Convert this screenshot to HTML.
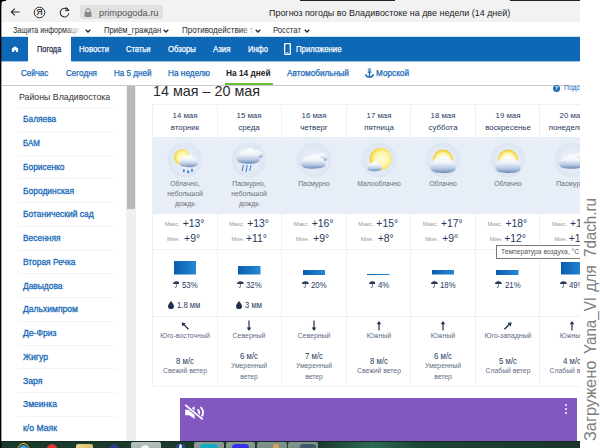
<!DOCTYPE html><html lang="ru"><head><meta charset="utf-8"><title>Прогноз погоды во Владивостоке на две недели (14 дней)</title><style>
*{margin:0;padding:0;box-sizing:border-box}
html,body{width:600px;height:448px;overflow:hidden;background:#fff}
body{position:relative;font-family:"Liberation Sans", sans-serif;color:#222}
.a{position:absolute;white-space:nowrap}
.c{position:absolute;white-space:nowrap;text-align:center;transform:translateX(-50%)}
</style></head><body><div class="a" style="left:0px;top:0px;width:580px;height:21.5px;background:#f2f2f2;"></div>
<div class="a" style="left:300px;top:0px;width:95px;height:1px;background:#222;"></div>
<div class="a" style="left:510px;top:0px;width:70px;height:1px;background:#222;"></div>
<div class="a" style="left:80px;top:5px;width:83px;height:14px;background:#e1e1e1;border-radius:3px;"></div>
<svg class="a" style="left:9.6px;top:7.4px" width="12" height="10" viewBox="0 0 12 10"><path d="M9.6 5H1.6M4.8 1.6L1.3 5l3.5 3.4" fill="none" stroke="#2a2a2a" stroke-width="1.05"/></svg>
<svg class="a" style="left:32.9px;top:5.9px" width="13" height="13" viewBox="0 0 13 13"><circle cx="6.5" cy="6.5" r="5.3" fill="none" stroke="#2a2a2a" stroke-width="1"/></svg>
<div class="a" style="left:36.6px;top:7.46px;font-size:8.4px;line-height:10.08px;color:#1a1a1a;-webkit-text-stroke:0.2px #1a1a1a;">Я</div>
<svg class="a" style="left:58px;top:5.9px" width="13" height="13" viewBox="0 0 13 13"><path d="M10.2 4.4A4.3 4.3 0 1 0 10.8 7.2" fill="none" stroke="#2a2a2a" stroke-width="1.05"/><path d="M8.2 1.4l2.4 3.2-3.4 0.2" fill="none" stroke="#2a2a2a" stroke-width="1.05"/></svg>
<svg class="a" style="left:84px;top:8px" width="8" height="9" viewBox="0 0 8 9"><rect x="0.5" y="4" width="7" height="5" rx="0.8" fill="#8a8a8a"/><path d="M2 4V2.6a2 2 0 0 1 4 0V4" fill="none" stroke="#8a8a8a" stroke-width="1"/></svg>
<div class="a" style="left:99.25px;top:6.54px;font-size:9.6px;line-height:11.52px;color:#555;transform:scaleX(0.9616);transform-origin:0 50%;">primpogoda.ru</div>
<div class="a" style="left:268.75px;top:6.54px;font-size:9.6px;line-height:11.52px;color:#222;transform:scaleX(0.9316);transform-origin:0 50%;">Прогноз погоды во Владивостоке на две недели (14 дней)</div>
<div class="a" style="left:12.5px;top:24.88px;font-size:9.2px;line-height:11.04px;color:#2a2a2a;transform:scaleX(0.7772);transform-origin:0 50%;">Защита информаци</div>
<div class="a" style="left:66px;top:24px;width:13px;height:12px;background:linear-gradient(90deg,rgba(255,255,255,0),rgba(255,255,255,.85));"></div>
<svg class="a" style="left:84.7px;top:28.7px" width="6" height="4" viewBox="0 0 6 4"><path d="M0.7 0.7L3 3l2.3-2.3" fill="none" stroke="#222" stroke-width="1.25"/></svg>
<div class="a" style="left:103.75px;top:24.88px;font-size:9.2px;line-height:11.04px;color:#2a2a2a;transform:scaleX(0.8339);transform-origin:0 50%;">Приём_граждан</div>
<svg class="a" style="left:163px;top:28.7px" width="6" height="4" viewBox="0 0 6 4"><path d="M0.7 0.7L3 3l2.3-2.3" fill="none" stroke="#222" stroke-width="1.25"/></svg>
<div class="a" style="left:181.75px;top:24.88px;font-size:9.2px;line-height:11.04px;color:#2a2a2a;transform:scaleX(0.8726);transform-origin:0 50%;">Противодействие т</div>
<div class="a" style="left:241px;top:24px;width:13px;height:12px;background:linear-gradient(90deg,rgba(255,255,255,0),rgba(255,255,255,.85));"></div>
<svg class="a" style="left:254.8px;top:28.7px" width="6" height="4" viewBox="0 0 6 4"><path d="M0.7 0.7L3 3l2.3-2.3" fill="none" stroke="#222" stroke-width="1.25"/></svg>
<div class="a" style="left:273px;top:24.88px;font-size:9.2px;line-height:11.04px;color:#2a2a2a;transform:scaleX(0.8421);transform-origin:0 50%;">Росстат</div>
<svg class="a" style="left:303.5px;top:28.7px" width="6" height="4" viewBox="0 0 6 4"><path d="M0.7 0.7L3 3l2.3-2.3" fill="none" stroke="#222" stroke-width="1.25"/></svg>
<div class="a" style="left:1px;top:36.8px;width:579px;height:24.6px;background:#0e68b6;"></div>
<div class="a" style="left:1px;top:61px;width:579px;height:1px;background:rgba(14,104,182,0.4);"></div>
<div class="a" style="left:1px;top:36px;width:579px;height:1px;background:rgba(14,104,182,0.2);"></div>
<div class="a" style="left:28px;top:36px;width:43px;height:26px;background:#fff;"></div>
<svg class="a" style="left:10.8px;top:46px" width="8" height="6.4" viewBox="0 0 9 8" preserveAspectRatio="none"><path d="M4.5 0.3L0 4.2h1.2V8h2.3V5.4h2V8h2.3V4.2H9z" fill="#fff"/></svg>
<div class="a" style="left:37px;top:43.90px;font-size:9px;line-height:10.80px;color:#1c2b48;transform:scaleX(0.8186);transform-origin:0 50%;-webkit-text-stroke:0.25px #1c2b48;">Погода</div>
<div class="a" style="left:79.25px;top:43.90px;font-size:9px;line-height:10.80px;color:#fff;transform:scaleX(0.8610);transform-origin:0 50%;-webkit-text-stroke:0.25px #fff;">Новости</div>
<div class="a" style="left:126.25px;top:43.90px;font-size:9px;line-height:10.80px;color:#fff;transform:scaleX(0.8399);transform-origin:0 50%;-webkit-text-stroke:0.25px #fff;">Статьи</div>
<div class="a" style="left:168px;top:43.90px;font-size:9px;line-height:10.80px;color:#fff;transform:scaleX(0.8547);transform-origin:0 50%;-webkit-text-stroke:0.25px #fff;">Обзоры</div>
<div class="a" style="left:213px;top:43.90px;font-size:9px;line-height:10.80px;color:#fff;transform:scaleX(0.8736);transform-origin:0 50%;-webkit-text-stroke:0.25px #fff;">Азия</div>
<div class="a" style="left:247.5px;top:43.90px;font-size:9px;line-height:10.80px;color:#fff;transform:scaleX(0.8382);transform-origin:0 50%;-webkit-text-stroke:0.25px #fff;">Инфо</div>
<svg class="a" style="left:284px;top:43px" width="7" height="12" viewBox="0 0 7 12"><rect x="0.6" y="0.6" width="5.8" height="10.8" rx="1" fill="none" stroke="#fff" stroke-width="1.4"/><rect x="2.5" y="9.3" width="2" height="1" fill="#fff"/></svg>
<div class="a" style="left:295.75px;top:43.90px;font-size:9px;line-height:10.80px;color:#fff;transform:scaleX(0.8618);transform-origin:0 50%;-webkit-text-stroke:0.25px #fff;">Приложение</div>
<div class="a" style="left:20.75px;top:67.60px;font-size:9px;line-height:10.80px;color:#1468b6;transform:scaleX(0.8866);transform-origin:0 50%;-webkit-text-stroke:0.25px #1468b6;">Сейчас</div>
<div class="a" style="left:65.5px;top:67.60px;font-size:9px;line-height:10.80px;color:#1468b6;transform:scaleX(0.8986);transform-origin:0 50%;-webkit-text-stroke:0.25px #1468b6;">Сегодня</div>
<div class="a" style="left:113.5px;top:67.60px;font-size:9px;line-height:10.80px;color:#1468b6;transform:scaleX(0.8979);transform-origin:0 50%;-webkit-text-stroke:0.25px #1468b6;">На 5 дней</div>
<div class="a" style="left:168px;top:67.60px;font-size:9px;line-height:10.80px;color:#1468b6;transform:scaleX(0.9180);transform-origin:0 50%;-webkit-text-stroke:0.25px #1468b6;">На неделю</div>
<div class="a" style="left:287px;top:67.60px;font-size:9px;line-height:10.80px;color:#1468b6;transform:scaleX(0.9161);transform-origin:0 50%;-webkit-text-stroke:0.25px #1468b6;">Автомобильный</div>
<div class="a" style="left:376.25px;top:67.60px;font-size:9px;line-height:10.80px;color:#1468b6;transform:scaleX(0.9119);transform-origin:0 50%;-webkit-text-stroke:0.25px #1468b6;">Морской</div>
<div class="a" style="left:226.25px;top:67.60px;font-size:9px;line-height:10.80px;color:#222;transform:scaleX(0.9229);transform-origin:0 50%;font-weight:bold;">На 14 дней</div>
<svg class="a" style="left:365px;top:68px" width="9" height="10" viewBox="0 0 9 10"><circle cx="4.5" cy="1.6" r="1.1" fill="none" stroke="#1768b3" stroke-width="1"/><path d="M4.5 2.7V9M2.6 4.2h3.8M0.6 6.2c0.4 2 2 2.9 3.9 2.9s3.5-0.9 3.9-2.9" fill="none" stroke="#1768b3" stroke-width="1.25"/></svg>
<div class="a" style="left:2px;top:85px;width:578px;height:1px;background:#c9c9c9;"></div>
<div class="a" style="left:224.5px;top:83.4px;width:48px;height:1.9px;background:#6bbf32;"></div>
<div class="a" style="left:126px;top:86px;width:10px;height:355px;background:#efefef;"></div>
<div class="a" style="left:127px;top:86px;width:7.6px;height:123px;background:#b9b9b9;"></div>
<div class="a" style="left:18.75px;top:91.24px;font-size:9.6px;line-height:11.52px;color:#333;transform:scaleX(0.9148);transform-origin:0 50%;">Районы Владивостока</div>
<div class="a" style="left:23px;top:114.48px;font-size:9.2px;line-height:11.04px;color:#1468b6;transform:scaleX(0.9113);transform-origin:0 50%;-webkit-text-stroke:0.3px #1468b6;">Баляева</div>
<div class="a" style="left:17px;top:107.0px;width:99px;height:1px;background:#f5f5f5;"></div>
<div class="a" style="left:23px;top:138.23px;font-size:9.2px;line-height:11.04px;color:#1468b6;transform:scaleX(0.8669);transform-origin:0 50%;-webkit-text-stroke:0.3px #1468b6;">БАМ</div>
<div class="a" style="left:17px;top:130.75px;width:99px;height:1px;background:#f5f5f5;"></div>
<div class="a" style="left:23px;top:161.98px;font-size:9.2px;line-height:11.04px;color:#1468b6;transform:scaleX(0.9143);transform-origin:0 50%;-webkit-text-stroke:0.3px #1468b6;">Борисенко</div>
<div class="a" style="left:17px;top:154.5px;width:99px;height:1px;background:#f5f5f5;"></div>
<div class="a" style="left:23px;top:185.73px;font-size:9.2px;line-height:11.04px;color:#1468b6;transform:scaleX(0.9169);transform-origin:0 50%;-webkit-text-stroke:0.3px #1468b6;">Бородинская</div>
<div class="a" style="left:17px;top:178.25px;width:99px;height:1px;background:#f5f5f5;"></div>
<div class="a" style="left:23px;top:209.48px;font-size:9.2px;line-height:11.04px;color:#1468b6;transform:scaleX(0.9218);transform-origin:0 50%;-webkit-text-stroke:0.3px #1468b6;">Ботанический сад</div>
<div class="a" style="left:17px;top:202.0px;width:99px;height:1px;background:#f5f5f5;"></div>
<div class="a" style="left:23px;top:233.23px;font-size:9.2px;line-height:11.04px;color:#1468b6;transform:scaleX(0.9136);transform-origin:0 50%;-webkit-text-stroke:0.3px #1468b6;">Весенняя</div>
<div class="a" style="left:17px;top:225.75px;width:99px;height:1px;background:#f5f5f5;"></div>
<div class="a" style="left:23px;top:256.98px;font-size:9.2px;line-height:11.04px;color:#1468b6;transform:scaleX(0.9140);transform-origin:0 50%;-webkit-text-stroke:0.3px #1468b6;">Вторая Речка</div>
<div class="a" style="left:17px;top:249.5px;width:99px;height:1px;background:#f5f5f5;"></div>
<div class="a" style="left:23px;top:280.73px;font-size:9.2px;line-height:11.04px;color:#1468b6;transform:scaleX(0.9146);transform-origin:0 50%;-webkit-text-stroke:0.3px #1468b6;">Давыдова</div>
<div class="a" style="left:17px;top:273.25px;width:99px;height:1px;background:#f5f5f5;"></div>
<div class="a" style="left:23px;top:304.48px;font-size:9.2px;line-height:11.04px;color:#1468b6;transform:scaleX(0.9315);transform-origin:0 50%;-webkit-text-stroke:0.3px #1468b6;">Дальхимпром</div>
<div class="a" style="left:17px;top:297.0px;width:99px;height:1px;background:#f5f5f5;"></div>
<div class="a" style="left:23px;top:328.23px;font-size:9.2px;line-height:11.04px;color:#1468b6;transform:scaleX(0.9346);transform-origin:0 50%;-webkit-text-stroke:0.3px #1468b6;">Де-Фриз</div>
<div class="a" style="left:17px;top:320.75px;width:99px;height:1px;background:#f5f5f5;"></div>
<div class="a" style="left:23px;top:351.98px;font-size:9.2px;line-height:11.04px;color:#1468b6;transform:scaleX(0.9406);transform-origin:0 50%;-webkit-text-stroke:0.3px #1468b6;">Жигур</div>
<div class="a" style="left:17px;top:344.5px;width:99px;height:1px;background:#f5f5f5;"></div>
<div class="a" style="left:23px;top:375.73px;font-size:9.2px;line-height:11.04px;color:#1468b6;transform:scaleX(0.9447);transform-origin:0 50%;-webkit-text-stroke:0.3px #1468b6;">Заря</div>
<div class="a" style="left:17px;top:368.25px;width:99px;height:1px;background:#f5f5f5;"></div>
<div class="a" style="left:23px;top:399.48px;font-size:9.2px;line-height:11.04px;color:#1468b6;transform:scaleX(0.9311);transform-origin:0 50%;-webkit-text-stroke:0.3px #1468b6;">Змеинка</div>
<div class="a" style="left:17px;top:392.0px;width:99px;height:1px;background:#f5f5f5;"></div>
<div class="a" style="left:23px;top:423.23px;font-size:9.2px;line-height:11.04px;color:#1468b6;transform:scaleX(0.9416);transform-origin:0 50%;-webkit-text-stroke:0.3px #1468b6;">к/о Маяк</div>
<div class="a" style="left:17px;top:415.75px;width:99px;height:1px;background:#f5f5f5;"></div>
<div class="a" style="left:153.3px;top:82.96px;font-size:14.4px;line-height:17.28px;color:#2a2a2a;transform:scaleX(0.9964);transform-origin:0 50%;">14 мая – 20 мая</div>
<svg class="a" style="left:553px;top:84.5px" width="7" height="7" viewBox="0 0 7 7"><circle cx="3.5" cy="3.5" r="3.5" fill="#1b6db6"/></svg>
<div class="a" style="left:554.8px;top:84.90px;font-size:5.5px;line-height:6.60px;color:#fff;font-weight:bold;">?</div>
<div class="a" style="left:564px;top:82.9px;width:16px;overflow:hidden;font-size:6.8px;line-height:9px;color:#1468b6">Подсказка</div>
<div class="a" style="left:152.1px;top:137.2px;width:427.9px;height:76.8px;background:#e7eef8;"></div>
<div class="a" style="left:152.1px;top:104px;width:427.9px;height:1px;background:#f1f1f1;"></div>
<div class="a" style="left:152.1px;top:248.5px;width:427.9px;height:1px;background:#f1f1f1;"></div>
<div class="a" style="left:152.1px;top:315.5px;width:427.9px;height:1px;background:#f1f1f1;"></div>
<div class="a" style="left:152.1px;top:385.5px;width:427.9px;height:1px;background:#f1f1f1;"></div>
<div class="a" style="left:152.1px;top:104px;width:1px;height:281.5px;background:#f0f0f0;"></div>
<div class="a" style="left:216.64999999999998px;top:104px;width:1px;height:281.5px;background:#f0f0f0;"></div>
<div class="a" style="left:281.2px;top:104px;width:1px;height:281.5px;background:#f0f0f0;"></div>
<div class="a" style="left:345.75px;top:104px;width:1px;height:281.5px;background:#f0f0f0;"></div>
<div class="a" style="left:410.29999999999995px;top:104px;width:1px;height:281.5px;background:#f0f0f0;"></div>
<div class="a" style="left:474.85px;top:104px;width:1px;height:281.5px;background:#f0f0f0;"></div>
<div class="a" style="left:539.4px;top:104px;width:1px;height:281.5px;background:#f0f0f0;"></div>
<svg width="0" height="0" style="position:absolute"><defs><radialGradient id="bg" cx="50%" cy="50%" r="50%"><stop offset="0" stop-color="#eef3fa"/><stop offset="0.75" stop-color="#e2e9f4"/><stop offset="1" stop-color="#dce5f1"/></radialGradient><radialGradient id="sg" cx="55%" cy="50%" r="55%"><stop offset="0" stop-color="#fffde2"/><stop offset="0.62" stop-color="#fdf4a2"/><stop offset="0.88" stop-color="#f6dc4e"/><stop offset="1" stop-color="#ecc73a"/></radialGradient><radialGradient id="sg2" cx="50%" cy="55%" r="52%"><stop offset="0" stop-color="#fffef0"/><stop offset="0.7" stop-color="#fdf6b4"/><stop offset="0.9" stop-color="#f6dc4e"/><stop offset="1" stop-color="#ecc73a"/></radialGradient><linearGradient id="cg" x1="0" y1="0" x2="0" y2="1"><stop offset="0" stop-color="#ffffff"/><stop offset="0.4" stop-color="#eef3f9"/><stop offset="0.72" stop-color="#b7c9e2"/><stop offset="1" stop-color="#6d8cba"/></linearGradient><linearGradient id="bar" x1="0" y1="0" x2="1" y2="0"><stop offset="0" stop-color="#0b5cae"/><stop offset="1" stop-color="#2589d6"/></linearGradient></defs></svg>
<div class="a" style="left:0;top:0;width:580px;height:448px;overflow:hidden">
<div class="c" style="left:184.875px;top:110.54px;font-size:8.1px;line-height:9.72px;color:#263a5e;transform:translateX(-50%) scaleX(0.97);">14 мая</div>
<div class="c" style="left:184.875px;top:122.64px;font-size:8.1px;line-height:9.72px;color:#263a5e;transform:translateX(-50%) scaleX(0.97);">вторник</div>
<div class="a" style="left:166.875px;top:141.5px"><svg width="36" height="36" viewBox="0 0 36 36"><circle cx="18" cy="18" r="17.3" fill="url(#bg)"/><circle cx="15" cy="15.3" r="8" fill="url(#sg)"/><path transform="translate(21.6,19.4) scale(0.9444444444444444,0.9444444444444444)" d="M-9 3.2a3.4 3.4 0 0 1 1.6-5.4a4 4 0 0 1 4.6-2.6a4.9 4.9 0 0 1 8.4 1.2a3.5 3.5 0 0 1 3.4 4.2a2.6 2.6 0 0 1-1.4 4.2c-3 1.6-10.5 1.7-14.4 0.4a2.6 2.6 0 0 1-2.2-2z" fill="url(#cg)"/><path d="M15.9 29l1-2.6 1 2.6a1 1 0 0 1-2 0zM20.1 30.2l1-2.6 1 2.6a1 1 0 0 1-2 0zM24 28.7l1-2.6 1 2.6a1 1 0 0 1-2 0z" fill="#2272cc"/></svg></div>
<div class="c" style="left:184.875px;top:178.64px;font-size:7.6px;line-height:9.12px;color:#6e6e6e;transform:translateX(-50%) scaleX(0.9);">Облачно,</div>
<div class="c" style="left:184.875px;top:188.94px;font-size:7.6px;line-height:9.12px;color:#6e6e6e;transform:translateX(-50%) scaleX(0.9);">небольшой</div>
<div class="c" style="left:184.875px;top:199.24px;font-size:7.6px;line-height:9.12px;color:#6e6e6e;transform:translateX(-50%) scaleX(0.9);">дождь</div>
<div class="a" style="left:157.875px;width:22px;text-align:right;top:221.00px;font-size:5.8px;line-height:6.8px;color:#9a9a9a">Макс.</div>
<div class="a" style="left:182.675px;top:217.86px;font-size:10.4px;line-height:12.48px;color:#263a5e;">+13°</div>
<div class="a" style="left:157.875px;width:22px;text-align:right;top:235.60px;font-size:5.8px;line-height:6.8px;color:#9a9a9a">Мин.</div>
<div class="a" style="left:184.075px;top:232.56px;font-size:10.4px;line-height:12.48px;color:#263a5e;">+9°</div>
<svg class="a" style="left:173.675px;top:261.2px" width="22.5" height="13.5"><rect width="22.5" height="13.5" fill="url(#bar)"/></svg>
<svg class="a" style="left:172.697578125px;top:281.4px" width="6.8" height="7.2" viewBox="0 0 8 8"><path d="M0 3.4a4 3.2 0 0 1 8 0z" fill="#2a3b5c"/><path d="M4 3.2v3.4a0.9 0.9 0 0 1-1.8 0" fill="none" stroke="#2a3b5c" stroke-width="0.8"/></svg>
<div class="a" style="left:181.797578125px;top:280.04px;font-size:8.6px;line-height:10.32px;color:#263a5e;transform:scaleX(0.91);transform-origin:0 50%;">53%</div>
<svg class="a" style="left:168.33546875px;top:300.5px" width="6" height="8" viewBox="0 0 6 8"><path d="M3 0C3 0 0 3.6 0 5.2a3 2.8 0 0 0 6 0C6 3.6 3 0 3 0z" fill="#1f2f4f"/></svg>
<div class="a" style="left:177.13546875px;top:300.04px;font-size:8.6px;line-height:10.32px;color:#263a5e;transform:scaleX(0.89);transform-origin:0 50%;">1.8 мм</div>
<svg class="a" style="left:179.875px;top:320px" width="10" height="11" viewBox="0 0 10 11"><path d="M8.4 9.2L3.6 4.4" stroke="#1f2f4f" stroke-width="1.3" fill="none"/><path d="M1.6 2.4l4.2 0.8-3.4 3.4z" fill="#1f2f4f"/></svg>
<div class="c" style="left:184.875px;top:331.76px;font-size:7.4px;line-height:8.88px;color:#5d6c86;transform:translateX(-50%) scaleX(0.94);">Юго-восточный</div>
<div class="c" style="left:184.875px;top:355.74px;font-size:8.6px;line-height:10.32px;color:#263a5e;transform:translateX(-50%) scaleX(0.91);">8 м/с</div>
<div class="c" style="left:184.875px;top:367.46px;font-size:7.4px;line-height:8.88px;color:#5d6c86;transform:translateX(-50%) scaleX(0.92);">Свежий ветер</div>
<div class="c" style="left:249.42499999999998px;top:110.54px;font-size:8.1px;line-height:9.72px;color:#263a5e;transform:translateX(-50%) scaleX(0.97);">15 мая</div>
<div class="c" style="left:249.42499999999998px;top:122.64px;font-size:8.1px;line-height:9.72px;color:#263a5e;transform:translateX(-50%) scaleX(0.97);">среда</div>
<div class="a" style="left:231.42499999999998px;top:141.5px"><svg width="36" height="36" viewBox="0 0 36 36"><circle cx="18" cy="18" r="17.3" fill="url(#bg)"/><path transform="translate(26,12.2) scale(0.6111111111111112,0.6111111111111112)" d="M-9 3.2a3.4 3.4 0 0 1 1.6-5.4a4 4 0 0 1 4.6-2.6a4.9 4.9 0 0 1 8.4 1.2a3.5 3.5 0 0 1 3.4 4.2a2.6 2.6 0 0 1-1.4 4.2c-3 1.6-10.5 1.7-14.4 0.4a2.6 2.6 0 0 1-2.2-2z" fill="url(#cg)"/><path transform="translate(17.3,14.4) scale(1.2222222222222223,1.2222222222222223)" d="M-9 3.2a3.4 3.4 0 0 1 1.6-5.4a4 4 0 0 1 4.6-2.6a4.9 4.9 0 0 1 8.4 1.2a3.5 3.5 0 0 1 3.4 4.2a2.6 2.6 0 0 1-1.4 4.2c-3 1.6-10.5 1.7-14.4 0.4a2.6 2.6 0 0 1-2.2-2z" fill="url(#cg)"/><path d="M12.4 22.8l-1.2 6M16.2 22.8l-1.2 7M20 22.8l-1.2 6" stroke="#3d86d4" stroke-width="1.1" fill="none"/></svg></div>
<div class="c" style="left:249.42499999999998px;top:178.64px;font-size:7.6px;line-height:9.12px;color:#6e6e6e;transform:translateX(-50%) scaleX(0.9);">Пасмурно,</div>
<div class="c" style="left:249.42499999999998px;top:188.94px;font-size:7.6px;line-height:9.12px;color:#6e6e6e;transform:translateX(-50%) scaleX(0.9);">небольшой</div>
<div class="c" style="left:249.42499999999998px;top:199.24px;font-size:7.6px;line-height:9.12px;color:#6e6e6e;transform:translateX(-50%) scaleX(0.9);">дождь</div>
<div class="a" style="left:222.42499999999998px;width:22px;text-align:right;top:221.00px;font-size:5.8px;line-height:6.8px;color:#9a9a9a">Макс.</div>
<div class="a" style="left:247.225px;top:217.86px;font-size:10.4px;line-height:12.48px;color:#263a5e;">+13°</div>
<div class="a" style="left:222.42499999999998px;width:22px;text-align:right;top:235.60px;font-size:5.8px;line-height:6.8px;color:#9a9a9a">Мин.</div>
<div class="a" style="left:245.92499999999998px;top:232.56px;font-size:10.4px;line-height:12.48px;color:#263a5e;">+11°</div>
<svg class="a" style="left:238.225px;top:266.2px" width="22.5" height="8.5"><rect width="22.5" height="8.5" fill="url(#bar)"/></svg>
<svg class="a" style="left:237.247578125px;top:281.4px" width="6.8" height="7.2" viewBox="0 0 8 8"><path d="M0 3.4a4 3.2 0 0 1 8 0z" fill="#2a3b5c"/><path d="M4 3.2v3.4a0.9 0.9 0 0 1-1.8 0" fill="none" stroke="#2a3b5c" stroke-width="0.8"/></svg>
<div class="a" style="left:246.34757812499998px;top:280.04px;font-size:8.6px;line-height:10.32px;color:#263a5e;transform:scaleX(0.91);transform-origin:0 50%;">32%</div>
<svg class="a" style="left:236.076953125px;top:300.5px" width="6" height="8" viewBox="0 0 6 8"><path d="M3 0C3 0 0 3.6 0 5.2a3 2.8 0 0 0 6 0C6 3.6 3 0 3 0z" fill="#1f2f4f"/></svg>
<div class="a" style="left:244.876953125px;top:300.04px;font-size:8.6px;line-height:10.32px;color:#263a5e;transform:scaleX(0.89);transform-origin:0 50%;">3 мм</div>
<svg class="a" style="left:244.42499999999998px;top:320px" width="10" height="11" viewBox="0 0 10 11"><path d="M5 0.5V9" stroke="#1f2f4f" stroke-width="1.2" fill="none"/><path d="M5 11L2.7 7.6h4.6z" fill="#1f2f4f"/></svg>
<div class="c" style="left:249.42499999999998px;top:331.76px;font-size:7.4px;line-height:8.88px;color:#5d6c86;transform:translateX(-50%) scaleX(0.94);">Северный</div>
<div class="c" style="left:249.42499999999998px;top:350.64px;font-size:8.6px;line-height:10.32px;color:#263a5e;transform:translateX(-50%) scaleX(0.91);">6 м/с</div>
<div class="c" style="left:249.42499999999998px;top:362.36px;font-size:7.4px;line-height:8.88px;color:#5d6c86;transform:translateX(-50%) scaleX(0.92);">Умеренный</div>
<div class="c" style="left:249.42499999999998px;top:372.56px;font-size:7.4px;line-height:8.88px;color:#5d6c86;transform:translateX(-50%) scaleX(0.92);">ветер</div>
<div class="c" style="left:313.97499999999997px;top:110.54px;font-size:8.1px;line-height:9.72px;color:#263a5e;transform:translateX(-50%) scaleX(0.97);">16 мая</div>
<div class="c" style="left:313.97499999999997px;top:122.64px;font-size:8.1px;line-height:9.72px;color:#263a5e;transform:translateX(-50%) scaleX(0.97);">четверг</div>
<div class="a" style="left:295.97499999999997px;top:141.5px"><svg width="36" height="36" viewBox="0 0 36 36"><circle cx="18" cy="18" r="17.3" fill="url(#bg)"/><path transform="translate(25,15.2) scale(0.6666666666666666,0.6666666666666666)" d="M-9 3.2a3.4 3.4 0 0 1 1.6-5.4a4 4 0 0 1 4.6-2.6a4.9 4.9 0 0 1 8.4 1.2a3.5 3.5 0 0 1 3.4 4.2a2.6 2.6 0 0 1-1.4 4.2c-3 1.6-10.5 1.7-14.4 0.4a2.6 2.6 0 0 1-2.2-2z" fill="url(#cg)"/><path transform="translate(17.2,20) scale(1.2777777777777777,1.1)" d="M-9 3.2a3.4 3.4 0 0 1 1.6-5.4a4 4 0 0 1 4.6-2.6a4.9 4.9 0 0 1 8.4 1.2a3.5 3.5 0 0 1 3.4 4.2a2.6 2.6 0 0 1-1.4 4.2c-3 1.6-10.5 1.7-14.4 0.4a2.6 2.6 0 0 1-2.2-2z" fill="url(#cg)"/></svg></div>
<div class="c" style="left:313.97499999999997px;top:178.64px;font-size:7.6px;line-height:9.12px;color:#6e6e6e;transform:translateX(-50%) scaleX(0.9);">Пасмурно</div>
<div class="a" style="left:286.97499999999997px;width:22px;text-align:right;top:221.00px;font-size:5.8px;line-height:6.8px;color:#9a9a9a">Макс.</div>
<div class="a" style="left:311.775px;top:217.86px;font-size:10.4px;line-height:12.48px;color:#263a5e;">+16°</div>
<div class="a" style="left:286.97499999999997px;width:22px;text-align:right;top:235.60px;font-size:5.8px;line-height:6.8px;color:#9a9a9a">Мин.</div>
<div class="a" style="left:313.17499999999995px;top:232.56px;font-size:10.4px;line-height:12.48px;color:#263a5e;">+9°</div>
<svg class="a" style="left:302.775px;top:269.7px" width="22.5" height="5"><rect width="22.5" height="5" fill="url(#bar)"/></svg>
<svg class="a" style="left:301.7975781249999px;top:281.4px" width="6.8" height="7.2" viewBox="0 0 8 8"><path d="M0 3.4a4 3.2 0 0 1 8 0z" fill="#2a3b5c"/><path d="M4 3.2v3.4a0.9 0.9 0 0 1-1.8 0" fill="none" stroke="#2a3b5c" stroke-width="0.8"/></svg>
<div class="a" style="left:310.89757812499994px;top:280.04px;font-size:8.6px;line-height:10.32px;color:#263a5e;transform:scaleX(0.91);transform-origin:0 50%;">20%</div>
<svg class="a" style="left:308.97499999999997px;top:320px" width="10" height="11" viewBox="0 0 10 11"><path d="M5 0.5V9" stroke="#1f2f4f" stroke-width="1.2" fill="none"/><path d="M5 11L2.7 7.6h4.6z" fill="#1f2f4f"/></svg>
<div class="c" style="left:313.97499999999997px;top:331.76px;font-size:7.4px;line-height:8.88px;color:#5d6c86;transform:translateX(-50%) scaleX(0.94);">Северный</div>
<div class="c" style="left:313.97499999999997px;top:350.64px;font-size:8.6px;line-height:10.32px;color:#263a5e;transform:translateX(-50%) scaleX(0.91);">7 м/с</div>
<div class="c" style="left:313.97499999999997px;top:362.36px;font-size:7.4px;line-height:8.88px;color:#5d6c86;transform:translateX(-50%) scaleX(0.92);">Умеренный</div>
<div class="c" style="left:313.97499999999997px;top:372.56px;font-size:7.4px;line-height:8.88px;color:#5d6c86;transform:translateX(-50%) scaleX(0.92);">ветер</div>
<div class="c" style="left:378.525px;top:110.54px;font-size:8.1px;line-height:9.72px;color:#263a5e;transform:translateX(-50%) scaleX(0.97);">17 мая</div>
<div class="c" style="left:378.525px;top:122.64px;font-size:8.1px;line-height:9.72px;color:#263a5e;transform:translateX(-50%) scaleX(0.97);">пятница</div>
<div class="a" style="left:360.525px;top:141.5px"><svg width="36" height="36" viewBox="0 0 36 36"><circle cx="18" cy="18" r="17.3" fill="url(#bg)"/><circle cx="19.5" cy="17" r="11" fill="url(#sg)"/><path transform="translate(13.5,24.5) scale(0.7777777777777778,0.7777777777777778)" d="M-9 3.2a3.4 3.4 0 0 1 1.6-5.4a4 4 0 0 1 4.6-2.6a4.9 4.9 0 0 1 8.4 1.2a3.5 3.5 0 0 1 3.4 4.2a2.6 2.6 0 0 1-1.4 4.2c-3 1.6-10.5 1.7-14.4 0.4a2.6 2.6 0 0 1-2.2-2z" fill="url(#cg)"/></svg></div>
<div class="c" style="left:378.525px;top:178.64px;font-size:7.6px;line-height:9.12px;color:#6e6e6e;transform:translateX(-50%) scaleX(0.9);">Малооблачно</div>
<div class="a" style="left:351.525px;width:22px;text-align:right;top:221.00px;font-size:5.8px;line-height:6.8px;color:#9a9a9a">Макс.</div>
<div class="a" style="left:376.325px;top:217.86px;font-size:10.4px;line-height:12.48px;color:#263a5e;">+15°</div>
<div class="a" style="left:351.525px;width:22px;text-align:right;top:235.60px;font-size:5.8px;line-height:6.8px;color:#9a9a9a">Мин.</div>
<div class="a" style="left:377.72499999999997px;top:232.56px;font-size:10.4px;line-height:12.48px;color:#263a5e;">+8°</div>
<svg class="a" style="left:367.325px;top:273.7px" width="22.5" height="1"><rect width="22.5" height="1" fill="url(#bar)"/></svg>
<svg class="a" style="left:368.523046875px;top:281.4px" width="6.8" height="7.2" viewBox="0 0 8 8"><path d="M0 3.4a4 3.2 0 0 1 8 0z" fill="#2a3b5c"/><path d="M4 3.2v3.4a0.9 0.9 0 0 1-1.8 0" fill="none" stroke="#2a3b5c" stroke-width="0.8"/></svg>
<div class="a" style="left:377.623046875px;top:280.04px;font-size:8.6px;line-height:10.32px;color:#263a5e;transform:scaleX(0.91);transform-origin:0 50%;">4%</div>
<svg class="a" style="left:373.525px;top:320px" width="10" height="11" viewBox="0 0 10 11"><path d="M5 10.6V3" stroke="#1f2f4f" stroke-width="1.2" fill="none"/><path d="M5 1l2.2 3.3H2.8z" fill="#1f2f4f"/></svg>
<div class="c" style="left:378.525px;top:331.76px;font-size:7.4px;line-height:8.88px;color:#5d6c86;transform:translateX(-50%) scaleX(0.94);">Южный</div>
<div class="c" style="left:378.525px;top:355.74px;font-size:8.6px;line-height:10.32px;color:#263a5e;transform:translateX(-50%) scaleX(0.91);">8 м/с</div>
<div class="c" style="left:378.525px;top:367.46px;font-size:7.4px;line-height:8.88px;color:#5d6c86;transform:translateX(-50%) scaleX(0.92);">Свежий ветер</div>
<div class="c" style="left:443.07499999999993px;top:110.54px;font-size:8.1px;line-height:9.72px;color:#263a5e;transform:translateX(-50%) scaleX(0.97);">18 мая</div>
<div class="c" style="left:443.07499999999993px;top:122.64px;font-size:8.1px;line-height:9.72px;color:#263a5e;transform:translateX(-50%) scaleX(0.97);">суббота</div>
<div class="a" style="left:425.07499999999993px;top:141.5px"><svg width="36" height="36" viewBox="0 0 36 36"><circle cx="18" cy="18" r="17.3" fill="url(#bg)"/><circle cx="18" cy="17.5" r="10" fill="url(#sg2)"/><path transform="translate(18,23) scale(1.3333333333333333,1.3333333333333333)" d="M-9 3.2a3.4 3.4 0 0 1 1.6-5.4a4 4 0 0 1 4.6-2.6a4.9 4.9 0 0 1 8.4 1.2a3.5 3.5 0 0 1 3.4 4.2a2.6 2.6 0 0 1-1.4 4.2c-3 1.6-10.5 1.7-14.4 0.4a2.6 2.6 0 0 1-2.2-2z" fill="url(#cg)"/></svg></div>
<div class="c" style="left:443.07499999999993px;top:178.64px;font-size:7.6px;line-height:9.12px;color:#6e6e6e;transform:translateX(-50%) scaleX(0.9);">Облачно</div>
<div class="a" style="left:416.07499999999993px;width:22px;text-align:right;top:221.00px;font-size:5.8px;line-height:6.8px;color:#9a9a9a">Макс.</div>
<div class="a" style="left:440.87499999999994px;top:217.86px;font-size:10.4px;line-height:12.48px;color:#263a5e;">+17°</div>
<div class="a" style="left:416.07499999999993px;width:22px;text-align:right;top:235.60px;font-size:5.8px;line-height:6.8px;color:#9a9a9a">Мин.</div>
<div class="a" style="left:442.2749999999999px;top:232.56px;font-size:10.4px;line-height:12.48px;color:#263a5e;">+9°</div>
<svg class="a" style="left:431.87499999999994px;top:270.2px" width="22.5" height="4.5"><rect width="22.5" height="4.5" fill="url(#bar)"/></svg>
<svg class="a" style="left:430.8975781249999px;top:281.4px" width="6.8" height="7.2" viewBox="0 0 8 8"><path d="M0 3.4a4 3.2 0 0 1 8 0z" fill="#2a3b5c"/><path d="M4 3.2v3.4a0.9 0.9 0 0 1-1.8 0" fill="none" stroke="#2a3b5c" stroke-width="0.8"/></svg>
<div class="a" style="left:439.9975781249999px;top:280.04px;font-size:8.6px;line-height:10.32px;color:#263a5e;transform:scaleX(0.91);transform-origin:0 50%;">18%</div>
<svg class="a" style="left:438.07499999999993px;top:320px" width="10" height="11" viewBox="0 0 10 11"><path d="M5 10.6V3" stroke="#1f2f4f" stroke-width="1.2" fill="none"/><path d="M5 1l2.2 3.3H2.8z" fill="#1f2f4f"/></svg>
<div class="c" style="left:443.07499999999993px;top:331.76px;font-size:7.4px;line-height:8.88px;color:#5d6c86;transform:translateX(-50%) scaleX(0.94);">Южный</div>
<div class="c" style="left:443.07499999999993px;top:350.64px;font-size:8.6px;line-height:10.32px;color:#263a5e;transform:translateX(-50%) scaleX(0.91);">6 м/с</div>
<div class="c" style="left:443.07499999999993px;top:362.36px;font-size:7.4px;line-height:8.88px;color:#5d6c86;transform:translateX(-50%) scaleX(0.92);">Умеренный</div>
<div class="c" style="left:443.07499999999993px;top:372.56px;font-size:7.4px;line-height:8.88px;color:#5d6c86;transform:translateX(-50%) scaleX(0.92);">ветер</div>
<div class="c" style="left:507.625px;top:110.54px;font-size:8.1px;line-height:9.72px;color:#263a5e;transform:translateX(-50%) scaleX(0.97);">19 мая</div>
<div class="c" style="left:507.625px;top:122.64px;font-size:8.1px;line-height:9.72px;color:#263a5e;transform:translateX(-50%) scaleX(0.97);">воскресенье</div>
<div class="a" style="left:489.625px;top:141.5px"><svg width="36" height="36" viewBox="0 0 36 36"><circle cx="18" cy="18" r="17.3" fill="url(#bg)"/><circle cx="18" cy="17.5" r="10" fill="url(#sg2)"/><path transform="translate(18,23) scale(1.3333333333333333,1.3333333333333333)" d="M-9 3.2a3.4 3.4 0 0 1 1.6-5.4a4 4 0 0 1 4.6-2.6a4.9 4.9 0 0 1 8.4 1.2a3.5 3.5 0 0 1 3.4 4.2a2.6 2.6 0 0 1-1.4 4.2c-3 1.6-10.5 1.7-14.4 0.4a2.6 2.6 0 0 1-2.2-2z" fill="url(#cg)"/></svg></div>
<div class="c" style="left:507.625px;top:178.64px;font-size:7.6px;line-height:9.12px;color:#6e6e6e;transform:translateX(-50%) scaleX(0.9);">Облачно</div>
<div class="a" style="left:480.625px;width:22px;text-align:right;top:221.00px;font-size:5.8px;line-height:6.8px;color:#9a9a9a">Макс.</div>
<div class="a" style="left:505.425px;top:217.86px;font-size:10.4px;line-height:12.48px;color:#263a5e;">+18°</div>
<div class="a" style="left:480.625px;width:22px;text-align:right;top:235.60px;font-size:5.8px;line-height:6.8px;color:#9a9a9a">Мин.</div>
<div class="a" style="left:504.125px;top:232.56px;font-size:10.4px;line-height:12.48px;color:#263a5e;">+12°</div>
<svg class="a" style="left:496.425px;top:269.7px" width="22.5" height="5"><rect width="22.5" height="5" fill="url(#bar)"/></svg>
<svg class="a" style="left:495.44757812499995px;top:281.4px" width="6.8" height="7.2" viewBox="0 0 8 8"><path d="M0 3.4a4 3.2 0 0 1 8 0z" fill="#2a3b5c"/><path d="M4 3.2v3.4a0.9 0.9 0 0 1-1.8 0" fill="none" stroke="#2a3b5c" stroke-width="0.8"/></svg>
<div class="a" style="left:504.547578125px;top:280.04px;font-size:8.6px;line-height:10.32px;color:#263a5e;transform:scaleX(0.91);transform-origin:0 50%;">21%</div>
<svg class="a" style="left:502.625px;top:320px" width="10" height="11" viewBox="0 0 10 11"><path d="M1.4 9.2l5-5" stroke="#1f2f4f" stroke-width="1.3" fill="none"/><path d="M8.6 2.2l-0.8 4.2-3.4-3.4z" fill="#1f2f4f"/></svg>
<div class="c" style="left:507.625px;top:331.76px;font-size:7.4px;line-height:8.88px;color:#5d6c86;transform:translateX(-50%) scaleX(0.94);">Юго-западный</div>
<div class="c" style="left:507.625px;top:355.74px;font-size:8.6px;line-height:10.32px;color:#263a5e;transform:translateX(-50%) scaleX(0.91);">5 м/с</div>
<div class="c" style="left:507.625px;top:367.46px;font-size:7.4px;line-height:8.88px;color:#5d6c86;transform:translateX(-50%) scaleX(0.92);">Слабый ветер</div>
<div class="c" style="left:572.175px;top:110.54px;font-size:8.1px;line-height:9.72px;color:#263a5e;transform:translateX(-50%) scaleX(0.97);">20 мая</div>
<div class="c" style="left:572.175px;top:122.64px;font-size:8.1px;line-height:9.72px;color:#263a5e;transform:translateX(-50%) scaleX(0.97);">понедельник</div>
<div class="a" style="left:554.175px;top:141.5px"><svg width="36" height="36" viewBox="0 0 36 36"><circle cx="18" cy="18" r="17.3" fill="url(#bg)"/><path transform="translate(25,15.2) scale(0.6666666666666666,0.6666666666666666)" d="M-9 3.2a3.4 3.4 0 0 1 1.6-5.4a4 4 0 0 1 4.6-2.6a4.9 4.9 0 0 1 8.4 1.2a3.5 3.5 0 0 1 3.4 4.2a2.6 2.6 0 0 1-1.4 4.2c-3 1.6-10.5 1.7-14.4 0.4a2.6 2.6 0 0 1-2.2-2z" fill="url(#cg)"/><path transform="translate(17.2,20) scale(1.2777777777777777,1.1)" d="M-9 3.2a3.4 3.4 0 0 1 1.6-5.4a4 4 0 0 1 4.6-2.6a4.9 4.9 0 0 1 8.4 1.2a3.5 3.5 0 0 1 3.4 4.2a2.6 2.6 0 0 1-1.4 4.2c-3 1.6-10.5 1.7-14.4 0.4a2.6 2.6 0 0 1-2.2-2z" fill="url(#cg)"/></svg></div>
<div class="c" style="left:572.175px;top:178.64px;font-size:7.6px;line-height:9.12px;color:#6e6e6e;transform:translateX(-50%) scaleX(0.9);">Пасмурно</div>
<div class="a" style="left:545.175px;width:22px;text-align:right;top:221.00px;font-size:5.8px;line-height:6.8px;color:#9a9a9a">Макс.</div>
<div class="a" style="left:569.9749999999999px;top:217.86px;font-size:10.4px;line-height:12.48px;color:#263a5e;">+15°</div>
<div class="a" style="left:545.175px;width:22px;text-align:right;top:235.60px;font-size:5.8px;line-height:6.8px;color:#9a9a9a">Мин.</div>
<div class="a" style="left:568.675px;top:232.56px;font-size:10.4px;line-height:12.48px;color:#263a5e;">+11°</div>
<svg class="a" style="left:560.9749999999999px;top:262.2px" width="22.5" height="12.5"><rect width="22.5" height="12.5" fill="url(#bar)"/></svg>
<svg class="a" style="left:559.9975781249999px;top:281.4px" width="6.8" height="7.2" viewBox="0 0 8 8"><path d="M0 3.4a4 3.2 0 0 1 8 0z" fill="#2a3b5c"/><path d="M4 3.2v3.4a0.9 0.9 0 0 1-1.8 0" fill="none" stroke="#2a3b5c" stroke-width="0.8"/></svg>
<div class="a" style="left:569.0975781249999px;top:280.04px;font-size:8.6px;line-height:10.32px;color:#263a5e;transform:scaleX(0.91);transform-origin:0 50%;">49%</div>
<svg class="a" style="left:567.175px;top:320px" width="10" height="11" viewBox="0 0 10 11"><path d="M5 10.6V3" stroke="#1f2f4f" stroke-width="1.2" fill="none"/><path d="M5 1l2.2 3.3H2.8z" fill="#1f2f4f"/></svg>
<div class="c" style="left:572.175px;top:331.76px;font-size:7.4px;line-height:8.88px;color:#5d6c86;transform:translateX(-50%) scaleX(0.94);">Южный</div>
<div class="c" style="left:572.175px;top:355.74px;font-size:8.6px;line-height:10.32px;color:#263a5e;transform:translateX(-50%) scaleX(0.91);">4 м/с</div>
<div class="c" style="left:572.175px;top:367.46px;font-size:7.4px;line-height:8.88px;color:#5d6c86;transform:translateX(-50%) scaleX(0.92);">Слабый ветер</div>
</div>
<div class="a" style="left:496px;top:245.2px;width:90px;height:13.6px;background:#fff;border:1px solid #7a7a7a;"></div>
<div class="a" style="left:500.6px;top:247.32px;font-size:7.8px;line-height:9.36px;color:#555;transform:scaleX(0.8592);transform-origin:0 50%;">Температура воздуха, °C</div>
<div class="a" style="left:180.2px;top:397.7px;width:397.3px;height:43.3px;background:#8258c0;"></div>
<svg class="a" style="left:183.8px;top:404.2px" width="22.5" height="17" viewBox="0 0 19 16" preserveAspectRatio="none"><path d="M1 5.5h3.5L9 2v12l-4.5-3.5H1z" fill="#fff"/><path d="M11.5 5a4 4 0 0 1 0 6M14 3a7 7 0 0 1 0 10" fill="none" stroke="#fff" stroke-width="1.6"/><path d="M1.5 1.2l14.4 13.4" stroke="#8258c0" stroke-width="3"/><path d="M1 0.8l14.8 13.6" stroke="#fff" stroke-width="1.5"/></svg>
<div class="a" style="left:565px;top:403.5px;width:2.4px;height:2.4px;background:#fff;border-radius:50%;"></div>
<div class="a" style="left:565px;top:407.7px;width:2.4px;height:2.4px;background:#fff;border-radius:50%;"></div>
<div class="a" style="left:565px;top:411.9px;width:2.4px;height:2.4px;background:#fff;border-radius:50%;"></div>
<div class="a" style="left:1px;top:441px;width:579px;height:7px;background:linear-gradient(90deg,#1b382c 0%,#1a3a2d 55%,#2b6a54 64%,#1d4535 72%,#183528 100%);"></div>
<div class="a" style="left:1px;top:441px;width:579px;height:0.7px;background:#142b20;"></div>
<div class="a" style="left:15px;top:443.2px;width:17.2px;height:17.2px;background:#e7c73a;border-radius:50% 50% 0 0 / 100% 100% 0 0;"></div>
<div class="a" style="left:16.2px;top:444.2px;width:14.8px;height:15px;background:#1b3a2d;border-radius:50% 50% 0 0 / 100% 100% 0 0;"></div>
<div class="a" style="left:16.8px;top:444.7px;width:13.6px;height:13.6px;background:radial-gradient(circle at 50% 50%,#7fd0f6 0,#2d8fdc 70%);border-radius:50% 50% 0 0 / 100% 100% 0 0;"></div>
<div class="a" style="left:43.8px;top:443.5px;width:16.4px;height:16.4px;background:#e0362b;border-radius:50% 50% 0 0 / 100% 100% 0 0;"></div>
<div class="a" style="left:76px;top:443.9px;width:16.7px;height:12.100000000000023px;background:linear-gradient(90deg,#e9d58a,#d9c06a);border-radius:2px 2px 0 0;"></div>
<div class="a" style="left:108.1px;top:444.2px;width:13.2px;height:13.2px;background:#2a3f86;border-radius:50% 50% 0 0 / 100% 100% 0 0;"></div>
<div class="a" style="left:131.3px;top:442px;width:29.7px;height:14px;background:linear-gradient(180deg,#b7c2bd,#97a6a0);border-radius:2px 2px 0 0;"></div>
<div class="a" style="left:137.2px;top:444.5px;width:16.2px;height:16.2px;background:#f4f4f4;border-radius:50% 50% 0 0 / 100% 100% 0 0;"></div>
<div class="a" style="left:176px;top:443.6px;width:8.7px;height:12.399999999999977px;background:#2c4585;border-radius:2px 2px 0 0;"></div>
<div class="a" style="left:178.6px;top:444.4px;width:3.4px;height:11.600000000000023px;background:#e8ecf4;border-radius:50% 50% 0 0;"></div>
<div class="a" style="left:194px;top:442.2px;width:30px;height:13.800000000000011px;background:linear-gradient(180deg,#8b9c95,#748880);border-radius:2px 2px 0 0;"></div>
<div class="a" style="left:200px;top:443.7px;width:18px;height:12.300000000000011px;background:#14a9c5;border-radius:4px 4px 0 0;"></div>
<div class="a" style="left:226px;top:442.2px;width:28.7px;height:13.800000000000011px;background:linear-gradient(180deg,#8b9c95,#748880);border-radius:2px 2px 0 0;"></div>
<div class="a" style="left:232px;top:443.7px;width:16.7px;height:12.300000000000011px;background:#3a2ff0;border-radius:4px 4px 0 0;"></div>
<div class="a" style="left:256.7px;top:442.2px;width:30px;height:13.800000000000011px;background:linear-gradient(180deg,#82958c,#6d8178);border-radius:2px 2px 0 0;"></div>
<div class="a" style="left:273px;top:444.2px;width:6px;height:11.800000000000011px;background:#d9a15a;border-radius:2px 2px 0 0;"></div>
<div class="a" style="left:288px;top:442.2px;width:29.5px;height:13.800000000000011px;background:linear-gradient(180deg,#82958c,#6d8178);border-radius:2px 2px 0 0;"></div>
<div class="a" style="left:300px;top:444.4px;width:16px;height:11.600000000000023px;background:#3d5a6a;border-radius:3px 3px 0 0;"></div>
<div class="a" style="left:580px;top:0px;width:20px;height:448px;background:#fff;"></div>
<div class="a" style="left:581.8px;top:440.9px;transform-origin:0 0;transform:rotate(-90deg) scaleX(1.0211);font-size:16px;line-height:18px;color:#7e7e7e">Загружено</div>
<div class="a" style="left:581.8px;top:353.8px;transform-origin:0 0;transform:rotate(-90deg) scaleX(0.9468);font-size:16px;line-height:18px;color:#7e7e7e">Yana_VI</div>
<div class="a" style="left:581.8px;top:291.8px;transform-origin:0 0;transform:rotate(-90deg) scaleX(0.9801);font-size:16px;line-height:18px;color:#7e7e7e">для</div>
<div class="a" style="left:581.8px;top:256.9px;transform-origin:0 0;transform:rotate(-90deg) scaleX(0.9459);font-size:16px;line-height:18px;color:#7e7e7e">7dach.ru</div>
<div class="a" style="left:0px;top:0px;width:1px;height:448px;background:#000;"></div>
<div class="a" style="left:1px;top:0px;width:1px;height:448px;background:rgba(0,0,0,0.35);"></div>
<svg class="a" style="left:0;top:0" width="6" height="6" viewBox="0 0 6 6"><path d="M0 0h6v1H4.5A3.3 3.3 0 0 0 1.2 4.3V6H0z" fill="#000"/></svg></body></html>
